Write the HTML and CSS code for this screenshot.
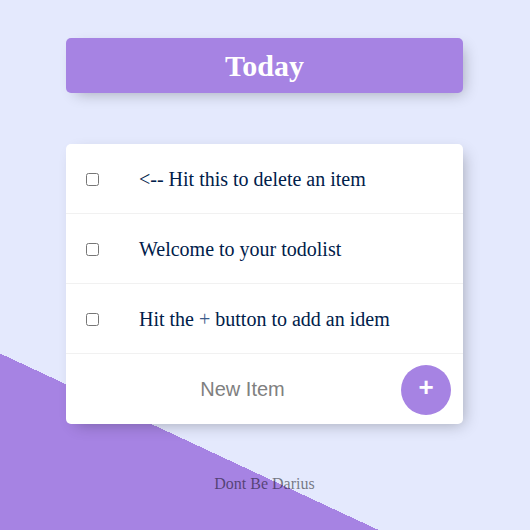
FILE: index.html
```html
<!DOCTYPE html>
<html lang="en">
<head>
<meta charset="utf-8">
<title>To Do List</title>
<link rel="stylesheet" href="styles.css">
</head>
<body>
<main class="page">
  <div class="heading">
    <h1 class="heading-title">Today</h1>
  </div>
  <div class="card">
    <div class="item">
      <input class="check" type="checkbox">
      <p class="item-text">&lt;-- Hit this to delete an item</p>
    </div>
    <div class="item">
      <input class="check" type="checkbox">
      <p class="item-text">Welcome to your todolist</p>
    </div>
    <div class="item">
      <input class="check" type="checkbox">
      <p class="item-text">Hit the <span class="plus-word">+</span> button to add an idem</p>
    </div>
    <form class="item item-form">
      <input class="new-item" type="text" name="newItem" placeholder="New Item" autocomplete="off">
      <button class="add-btn" type="button">+</button>
    </form>
  </div>
  <footer class="footer">Dont Be Darius</footer>
</main>
</body>
</html>
```
FILE: styles.css
```css
html, body {
  margin: 0;
  padding: 0;
}
body {
  min-height: 530px;
  background-color: #E4E9FD;
  background-image: linear-gradient(25deg, #A683E3 160px, #E4E9FD 160px);
  font-family: "Liberation Serif", "Times New Roman", serif;
}
.page {
  padding-top: 38px;
  padding-right: 1px;
}
.heading {
  width: 397px;
  margin: 0 auto;
  background-color: #A683E3;
  border-radius: 5px;
  box-shadow: 5px 5px 15px -5px rgba(0, 0, 0, 0.3);
  text-align: center;
}
.heading-title {
  margin: 0;
  padding: 10px;
  color: #fff;
  font-size: 30px;
  font-weight: bold;
  line-height: 35px;
}
.card {
  width: 397px;
  margin: 51px auto 0;
  background: #fff;
  border-radius: 5px;
  box-shadow: 5px 5px 15px -5px rgba(0, 0, 0, 0.3);
}
.item {
  box-sizing: border-box;
  height: 70px;
  display: flex;
  align-items: center;
  border-bottom: 1px solid #F1F1F1;
}
.item:last-child {
  border-bottom: 0;
}
.check {
  margin: 1px 20px 0;
  width: 13px;
  height: 13px;
  flex: none;
}
.item-text {
  margin: 0;
  padding: 21px 20px 19px;
  font-size: 20px;
  color: #00204a;
}
.plus-word {
  color: #3a5a8a;
}
.item-form {
  margin: 0;
  padding-left: 20px;
  gap: 2px;
}
.new-item {
  width: 313px;
  height: 60px;
  padding: 0;
  border: none;
  background: transparent;
  text-align: center;
  font-family: "Liberation Sans", Arial, sans-serif;
  font-size: 20px;
  color: #333;
}
.new-item::placeholder {
  color: grey;
  opacity: 1;
}
.new-item:focus {
  outline: none;
}
.add-btn {
  width: 50px;
  height: 50px;
  padding: 0 0 6px;
  border: 0;
  border-radius: 50%;
  background-color: #A683E3;
  color: #fff;
  font-family: "Liberation Sans", Arial, sans-serif;
  font-size: 26px;
  font-weight: bold;
  line-height: 44px;
  margin-top: 1px;
}
.footer {
  padding-top: 51px;
  text-align: center;
  color: rgba(0, 0, 0, 0.5);
  font-size: 16px;
}
```
